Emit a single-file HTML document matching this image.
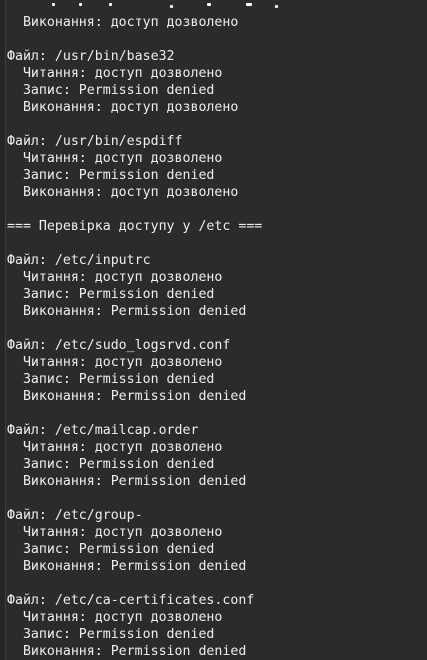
<!DOCTYPE html>
<html><head><meta charset="utf-8"><style>
html,body{margin:0;padding:0;width:427px;height:660px;overflow:hidden;background:#2b2b2b}
.strip{position:absolute;left:0;top:0;width:5px;height:660px;background:#262626;border-right:1px solid #3c3c3c}
pre{position:absolute;left:7px;top:14px;margin:0;font-family:"DejaVu Sans Mono","Liberation Mono",monospace;font-size:13.25px;line-height:17px;color:#eeeeee}
.d{position:absolute;top:3px;width:3px;height:3px;background:#fff;border-radius:1px}
</style></head><body>
<div class="strip"></div>
<div class="d" style="left:52px"></div><div class="d" style="left:79px"></div><div class="d" style="left:109px"></div><div class="d" style="left:170px;top:5px"></div><div class="d" style="left:207px;width:4px"></div><div class="d" style="left:246px;width:6px"></div><div class="d" style="left:275px;top:5px"></div>
<pre>  Виконання: доступ дозволено

Файл: /usr/bin/base32
  Читання: доступ дозволено
  Запис: Permission denied
  Виконання: доступ дозволено

Файл: /usr/bin/espdiff
  Читання: доступ дозволено
  Запис: Permission denied
  Виконання: доступ дозволено

=== Перевірка доступу у /etc ===

Файл: /etc/inputrc
  Читання: доступ дозволено
  Запис: Permission denied
  Виконання: Permission denied

Файл: /etc/sudo_logsrvd.conf
  Читання: доступ дозволено
  Запис: Permission denied
  Виконання: Permission denied

Файл: /etc/mailcap.order
  Читання: доступ дозволено
  Запис: Permission denied
  Виконання: Permission denied

Файл: /etc/group-
  Читання: доступ дозволено
  Запис: Permission denied
  Виконання: Permission denied

Файл: /etc/ca-certificates.conf
  Читання: доступ дозволено
  Запис: Permission denied
  Виконання: Permission denied</pre>
</body></html>
